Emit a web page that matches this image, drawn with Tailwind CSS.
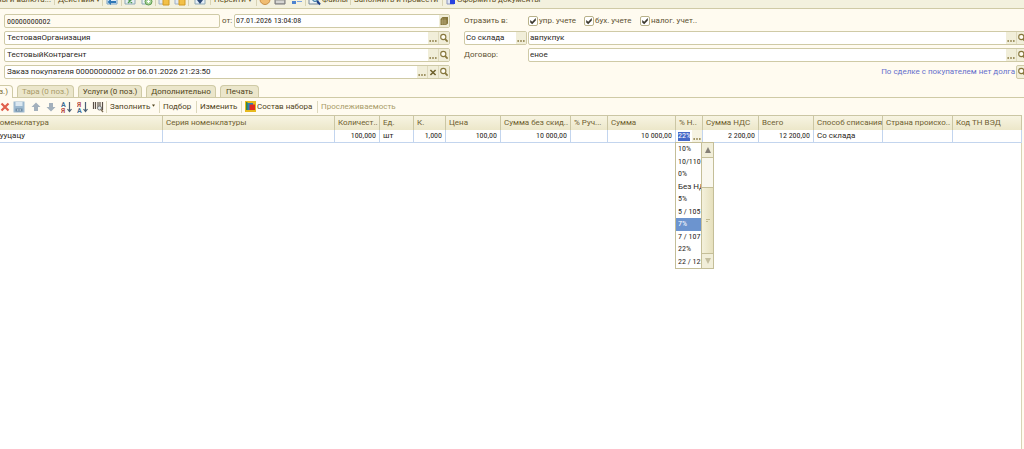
<!DOCTYPE html>
<html lang="ru">
<head>
    <meta charset="UTF-8">
    <meta name="viewport" content="width=device-width, initial-scale=1.0">
    <title>Реализация товаров и услуг</title>
    <script src="https://cdn.jsdelivr.net/npm/@tailwindcss/browser@4"></script>
</head>
<body class="min-h-screen bg-white overflow-hidden font-['Roboto',sans-serif] text-[8px] leading-[10px] text-[#2b2823]">

<!-- Значки, общие для полей -->
<svg class="hidden">
    <symbol id="lupa" viewBox="0 0 10 12"><circle cx="4.3" cy="5" r="2.6" fill="#fffdf2" stroke="#85763c" stroke-width="1.1"/><path d="M6.2 7.1 8.6 9.6" stroke="#85763c" stroke-width="1.7"/></symbol>
    <symbol id="dots" viewBox="0 0 10 12"><path d="M1.4 9h1.6M4.2 9h1.6M7 9h1.6" stroke="#85763c" stroke-width="1.4"/></symbol>
    <symbol id="clear" viewBox="0 0 10 12"><path d="M2.4 4 7.6 9M7.6 4 2.4 9" stroke="#6e602c" stroke-width="1.6"/></symbol>
    <symbol id="calendar" viewBox="0 0 10 12"><path d="M3.5 2H9v6.5L7 10H1.5V4z" fill="#85763c"/><path d="M1.8 6h6M1.8 8h6M3.8 3.4V10M6 3.4V10" stroke="#c9bf8c" stroke-width=".5"/></symbol>
    <symbol id="check" viewBox="0 0 10 10"><path d="M2.2 4v2.4l2 1.9 3.6-3.9V2L4.2 5.8z" fill="#3d3a30"/></symbol>
</svg>

<!-- Командная панель документа -->
<header class="h-[9px] overflow-hidden bg-[#f3f1de] border-b border-[#cfcaa6] text-[#5e4f1c]">
    <nav class="flex items-center -mt-[7px] h-[14px] whitespace-nowrap">
        <button class="w-[54px] shrink-0 flex justify-end pr-[3px]">Цены и валюта...</button>
        <button class="w-[48px] pl-[3px] text-left border-l border-[#d8d3b4]">Действия ▾</button>
        <button class="w-[19px] flex justify-center border-l border-[#d8d3b4]" aria-label="Перейти в список">
            <svg class="w-3 h-3" viewBox="0 0 12 12"><path d="M1 1h10v9H1z" fill="#dcebf7" stroke="#7ba3c4"/><path d="M10 7H5V4.5L1.5 8 5 11V9h5z" fill="#2f78b5"/></svg>
        </button>
        <button class="w-[17px] flex justify-center border-l border-[#d8d3b4]" aria-label="Обновить">
            <svg class="w-3 h-3" viewBox="0 0 12 12"><path d="M1 1h10v9H1z" fill="#e4eef2" stroke="#8fa9b5"/><path d="M4 5l4 4M8 5 4 9" stroke="#4f9a4f" stroke-width="1.4"/></svg>
        </button>
        <button class="w-[17px] flex justify-center" aria-label="Скопировать">
            <svg class="w-3 h-3" viewBox="0 0 12 12"><path d="M1 1h7v9H1z" fill="#eef3f5" stroke="#8fa9b5"/><circle cx="7.5" cy="7.5" r="3.5" fill="#a9d39b" stroke="#5d9a4e"/><path d="M6 7.5h3M7.5 6v3" stroke="#fff"/></svg>
        </button>
        <button class="w-[17px] flex justify-center border-l border-[#d8d3b4]" aria-label="Провести">
            <svg class="w-3 h-3" viewBox="0 0 12 12"><path d="M1 1h8v9H1z" fill="#e2e9f2" stroke="#9fb0c6"/><path d="M5 5h6v6H5z" fill="#f2c048" stroke="#d19a25"/></svg>
        </button>
        <button class="w-[16px] flex justify-center" aria-label="Отменить проведение">
            <svg class="w-3 h-3" viewBox="0 0 12 12"><path d="M1 1h8v9H1z" fill="#e2e9f2" stroke="#9fb0c6"/><path d="M5 5h6v6H5z" fill="#f2c048" stroke="#d19a25"/></svg>
        </button>
        <button class="w-[22px] flex justify-center border-l border-[#d8d3b4]" aria-label="Ввести на основании">
            <svg class="w-3 h-3" viewBox="0 0 12 12"><path d="M1 1h10v9H1z" fill="#e4eef7" stroke="#8fa9b5"/><path d="M3 6h6L6 10z" fill="#2c4a78"/></svg>
        </button>
        <button class="w-[46px] pl-[3px] text-left border-l border-[#d8d3b4]">Перейти ▾</button>
        <button class="w-[16px] flex justify-center border-l border-[#d8d3b4]" aria-label="Справка">
            <svg class="w-3 h-3" viewBox="0 0 12 12"><circle cx="6" cy="5.5" r="5" fill="#f0bd72" stroke="#c98f45"/></svg>
        </button>
        <button class="w-[16px] flex justify-center" aria-label="Печать документа">
            <svg class="w-3 h-3" viewBox="0 0 12 12"><path d="M1 4h10v6H1z" fill="#b5b5b0" stroke="#77777a"/><path d="M2 8h8" stroke="#f5f5f5"/></svg>
        </button>
        <button class="w-[17px] flex justify-center" aria-label="Структура">
            <svg class="w-3 h-3" viewBox="0 0 12 12"><path d="M1 2h4v4H1zM1 7h4v3H1z" fill="#4d83d0"/><path d="M6 5h5M6 7.5h5" stroke="#7ba3e0"/></svg>
        </button>
        <button class="w-[45px] flex items-center gap-px pl-[2px] border-l border-[#d8d3b4]">
            <svg class="w-[13px] h-3" viewBox="0 0 13 12"><path d="M1 1h9v9H1z" fill="#eef3f5" stroke="#77889a"/><circle cx="7" cy="5" r="2.5" fill="#bfe3ef" stroke="#33719c"/><path d="M9 7l3 3.5" stroke="#1d3f88" stroke-width="2"/></svg>
            Файлы
        </button>
        <button class="w-[92px] pl-[3px] text-left border-l border-[#d8d3b4]">Заполнить и провести</button>
        <button class="flex items-center pl-[3px] border-l border-[#d8d3b4]">
            <svg class="w-[11px] h-3" viewBox="0 0 11 12"><path d="M1 1h7v9H1z" fill="#dfe5f5" stroke="#8d97bd"/><path d="M4 6h5v4H4z" fill="#2742e0"/></svg>
            Оформить документы
        </button>
    </nav>
</header>

<main class="overflow-hidden bg-[#fffbf0]">
    <!-- Шапка документа -->
    <form class="flex gap-[14px] pl-1 pt-[5px] pb-[6px] -mr-1">
        <div class="w-[446px] shrink-0 flex flex-col gap-[3px]">
            <div class="flex items-center h-[14px]">
                <input aria-label="Номер" value="00000000002" class="w-[216px] h-full px-[2px] border border-[#cfcaa6] rounded-xs bg-[#fffbf0] font-['Roboto_Condensed','Roboto',sans-serif]">
                <label for="date" class="w-[14px] pl-[2px] text-[#5e5230]">от:</label>
                <div class="flex-1 flex h-full border border-[#cfcaa6] rounded-xs bg-white">
                    <input id="date" value="07.01.2026 13:04:08" class="flex-1 min-w-0 px-px font-['Roboto_Condensed','Roboto',sans-serif]">
                    <button type="button" aria-label="Календарь" class="w-[10px] bg-[#f1eed9]"><svg class="w-[10px] h-3"><use href="#calendar"/></svg></button>
                </div>
            </div>
            <div class="flex h-[14px] border border-[#cfcaa6] rounded-xs bg-white">
                <input aria-label="Организация" value="ТестоваяОрганизация" class="flex-1 min-w-0 px-[2px]">
                <button type="button" aria-label="Выбрать" class="w-[10px] bg-[#f1eed9]"><svg class="w-[10px] h-3"><use href="#dots"/></svg></button>
                <button type="button" aria-label="Открыть" class="w-[11px] bg-[#f1eed9] border-l border-[#dfdabd]"><svg class="w-[10px] h-3"><use href="#lupa"/></svg></button>
            </div>
            <div class="flex h-[14px] border border-[#cfcaa6] rounded-xs bg-white">
                <input aria-label="Контрагент" value="ТестовыйКонтрагент" class="flex-1 min-w-0 px-[2px]">
                <button type="button" aria-label="Выбрать" class="w-[10px] bg-[#f1eed9]"><svg class="w-[10px] h-3"><use href="#dots"/></svg></button>
                <button type="button" aria-label="Открыть" class="w-[11px] bg-[#f1eed9] border-l border-[#dfdabd]"><svg class="w-[10px] h-3"><use href="#lupa"/></svg></button>
            </div>
            <div class="flex h-[14px] border border-[#cfcaa6] rounded-xs bg-white">
                <input aria-label="Сделка" value="Заказ покупателя 00000000002 от 06.01.2026 21:23:50" class="flex-1 min-w-0 px-[2px]">
                <button type="button" aria-label="Выбрать" class="w-[10px] bg-[#f1eed9]"><svg class="w-[10px] h-3"><use href="#dots"/></svg></button>
                <button type="button" aria-label="Очистить" class="w-[11px] bg-[#f1eed9] border-l border-[#dfdabd]"><svg class="w-[10px] h-3"><use href="#clear"/></svg></button>
                <button type="button" aria-label="Открыть" class="w-[11px] bg-[#f1eed9] border-l border-[#dfdabd]"><svg class="w-[10px] h-3"><use href="#lupa"/></svg></button>
            </div>
        </div>

        <div class="flex-1 min-w-0 flex flex-col gap-[3px] text-[#5e5230]">
            <div class="flex items-center h-[14px]">
                <span class="w-16">Отразить в:</span>
                <label class="w-14 flex items-center gap-px whitespace-nowrap">
                    <span class="relative w-[10px] h-[10px]"><input type="checkbox" checked class="block appearance-none w-[10px] h-[10px] border border-[#b9b28a] rounded-xs bg-white"><svg class="absolute inset-0 w-[10px] h-[10px] pointer-events-none"><use href="#check"/></svg></span>
                    упр. учете
                </label>
                <label class="w-14 flex items-center gap-px whitespace-nowrap">
                    <span class="relative w-[10px] h-[10px]"><input type="checkbox" checked class="block appearance-none w-[10px] h-[10px] border border-[#b9b28a] rounded-xs bg-white"><svg class="absolute inset-0 w-[10px] h-[10px] pointer-events-none"><use href="#check"/></svg></span>
                    бух. учете
                </label>
                <label class="flex items-center gap-px whitespace-nowrap">
                    <span class="relative w-[10px] h-[10px]"><input type="checkbox" checked class="block appearance-none w-[10px] h-[10px] border border-[#b9b28a] rounded-xs bg-white"><svg class="absolute inset-0 w-[10px] h-[10px] pointer-events-none"><use href="#check"/></svg></span>
                    налог. учет..
                </label>
            </div>
            <div class="flex gap-px h-[14px] text-[#2b2823]">
                <div class="w-[63px] flex border border-[#cfcaa6] rounded-xs bg-white">
                    <input aria-label="Вид отгрузки" value="Со склада" class="flex-1 min-w-0 px-px">
                    <button type="button" aria-label="Выбрать" class="w-[10px] bg-[#f1eed9]"><svg class="w-[10px] h-3"><use href="#dots"/></svg></button>
                </div>
                <div class="flex-1 flex border border-[#cfcaa6] rounded-xs bg-white">
                    <input aria-label="Склад" value="авпукпук" class="flex-1 min-w-0 px-px">
                    <button type="button" aria-label="Выбрать" class="w-[10px] bg-[#f1eed9]"><svg class="w-[10px] h-3"><use href="#dots"/></svg></button>
                    <button type="button" aria-label="Открыть" class="w-[11px] bg-[#f1eed9] border-l border-[#dfdabd]"><svg class="w-[10px] h-3"><use href="#lupa"/></svg></button>
                </div>
            </div>
            <div class="flex items-center h-[14px]">
                <label for="contract" class="w-16">Договор:</label>
                <div class="flex-1 flex h-full border border-[#cfcaa6] rounded-xs bg-white text-[#2b2823]">
                    <input id="contract" value="еное" class="flex-1 min-w-0 px-px">
                    <button type="button" aria-label="Выбрать" class="w-[10px] bg-[#f1eed9]"><svg class="w-[10px] h-3"><use href="#dots"/></svg></button>
                    <button type="button" aria-label="Открыть" class="w-[11px] bg-[#f1eed9] border-l border-[#dfdabd]"><svg class="w-[10px] h-3"><use href="#lupa"/></svg></button>
                </div>
            </div>
            <div class="flex items-center justify-end gap-px h-[14px]">
                <a href="#" class="text-[#6670cc]">По сделке с покупателем нет долга</a>
                <button type="button" aria-label="Открыть" class="w-3 h-full border border-[#cfcaa6] rounded-xs bg-[#f1eed9]"><svg class="w-[10px] h-3"><use href="#lupa"/></svg></button>
            </div>
        </div>
    </form>

    <!-- Закладки -->
    <div role="tablist" class="flex gap-1 h-[13px] border-b border-[#cfcaa6] text-[#4f431a] whitespace-nowrap">
        <button role="tab" aria-selected="true" class="w-[13px] h-[13px] flex justify-end pr-1 items-center border-t border-r border-[#cfcaa6] rounded-tr-sm bg-[#fffbf0] text-[#7d6d35]">Товары (1 поз.)</button>
        <button role="tab" class="w-[57px] border border-b-0 border-[#cfcaa6] rounded-t-sm bg-[#ebe6cb] text-[#a99b68]">Тара (0 поз.)</button>
        <button role="tab" class="w-[64px] border border-b-0 border-[#cfcaa6] rounded-t-sm bg-[#ebe6cb]">Услуги (0 поз.)</button>
        <button role="tab" class="w-[70px] border border-b-0 border-[#cfcaa6] rounded-t-sm bg-[#ebe6cb]">Дополнительно</button>
        <button role="tab" class="w-[39px] border border-b-0 border-[#cfcaa6] rounded-t-sm bg-[#ebe6cb]">Печать</button>
    </div>

    <!-- Панель табличной части -->
    <div class="flex items-center h-[17px] text-[#4f431a]">
        <button aria-label="Удалить" class="w-[10px] flex justify-center"><svg class="w-[10px] h-[10px]" viewBox="0 0 10 10"><path d="M1.5 1.5 8.5 8.5M8.5 1.5 1.5 8.5" stroke="#e0604c" stroke-width="2.2"/></svg></button>
        <button aria-label="Закончить редактирование" class="w-[18px] flex justify-center"><svg class="w-3 h-3" viewBox="0 0 12 12"><path d="M.5.5h11v11H.5z" fill="#9db9cf"/><path d="M2.5 1h7v4h-7z" fill="#dce8f0"/><path d="M2.5 7.5h7v3h-7z" fill="#6e8ca5"/><path d="M4 9h1.5M6.5 9H8" stroke="#e8f0f5"/></svg></button>
        <button aria-label="Вверх" class="w-[15px] flex justify-center"><svg class="w-[10px] h-[10px]" viewBox="0 0 10 10"><path d="M5 .5 9.5 5H7v4H3V5H.5z" fill="#a3b0bc"/></svg></button>
        <button aria-label="Вниз" class="w-4 flex justify-center"><svg class="w-[10px] h-[10px]" viewBox="0 0 10 10"><path d="M5 9.5.5 5H3V1h4v4h2.5z" fill="#a3b0bc"/></svg></button>
        <button aria-label="Сортировать по возрастанию" class="w-[15px] flex justify-center"><svg class="w-[11px] h-3" viewBox="0 0 11 12"><text x="0" y="6" font-size="7" font-weight="700" fill="#3f6f96">А</text><text x="0" y="12" font-size="7" font-weight="700" fill="#b8504a">Я</text><path d="M8.5 1v9M6.5 8l2 2.5 2-2.5" fill="none" stroke="#4a5f75" stroke-width="1.2"/></svg></button>
        <button aria-label="Сортировать по убыванию" class="w-4 flex justify-center"><svg class="w-[11px] h-3" viewBox="0 0 11 12"><text x="0" y="6" font-size="7" font-weight="700" fill="#b8504a">Я</text><text x="0" y="12" font-size="7" font-weight="700" fill="#3f6f96">А</text><path d="M8.5 1v9M6.5 8l2 2.5 2-2.5" fill="none" stroke="#4a5f75" stroke-width="1.2"/></svg></button>
        <button aria-label="Штрихкод" class="w-4 flex justify-center"><svg class="w-3 h-3" viewBox="0 0 12 12"><path d="M1.5 1v7M3.5 1v7M6 1v6M8 1v5M10.5 1v8" stroke="#5a5048" stroke-width="1.2"/><circle cx="7.5" cy="7" r="2" fill="#dfe8ee" stroke="#7a7a78"/><path d="M9 8.5l2 2.5" stroke="#7a6a50" stroke-width="1.3"/></svg></button>
        <button class="h-3 w-[53px] pl-[3px] text-left border-l border-[#ddd8bc]">Заполнить <svg class="inline w-[3px] h-[3px] mb-px" viewBox="0 0 4 3"><path d="M0 0h4L2 3z" fill="#4f431a"/></svg></button>
        <button class="h-3 w-[37px] pl-[3px] text-left border-l border-[#ddd8bc]">Подбор</button>
        <button class="h-3 w-[45px] pl-[3px] text-left border-l border-[#ddd8bc]">Изменить</button>
        <button class="h-3 w-[76px] pl-[3px] flex items-center gap-px border-l border-[#ddd8bc] whitespace-nowrap">
            <svg class="w-[11px] h-[11px] shrink-0" viewBox="0 0 11 11"><path d="M0 0h11v11H0z" fill="#e6b91e"/><path d="M2 2h6v7H2z" fill="#2d7fb8"/><path d="M1 1h1.5v8H1z" fill="#3a8a3a"/><path d="M4.5 3.5H10V9H4.5z" fill="#e02a20"/></svg>
            Состав набора
        </button>
        <button disabled class="h-3 pl-[3px] border-l border-[#ddd8bc] text-[#a99b68]">Прослеживаемость</button>
    </div>

    <!-- Табличная часть: товары -->
    <div class="pr-[2px]">
        <table class="w-full table-fixed border-separate border-spacing-0 bg-white whitespace-nowrap">
            <colgroup>
                <col><col class="w-[172px]"><col class="w-[45px]"><col class="w-[34px]"><col class="w-[32px]">
                <col class="w-[55px]"><col class="w-[70px]"><col class="w-[37px]"><col class="w-[68px]"><col class="w-[27px]">
                <col class="w-[56px]"><col class="w-[55px]"><col class="w-[69px]"><col class="w-[70px]"><col class="w-[69px]">
            </colgroup>
            <thead>
                <tr class="h-[15px] text-left text-[#6f6030] bg-linear-to-b from-[#f8f5e4] to-[#ece7c9] *:font-normal *:p-0 *:pl-[3px] *:border-t *:border-r *:border-[#cbc6a4]">
                    <th class="overflow-hidden"><span class="block -ml-[9px]">Номенклатура</span></th>
                    <th>Серия номенклатуры</th>
                    <th>Количест..</th>
                    <th>Ед.</th>
                    <th>К.</th>
                    <th>Цена</th>
                    <th>Сумма без скид..</th>
                    <th>% Руч...</th>
                    <th>Сумма</th>
                    <th>% Н..</th>
                    <th>Сумма НДС</th>
                    <th>Всего</th>
                    <th>Способ списания</th>
                    <th>Страна происхо..</th>
                    <th>Код ТН ВЭД</th>
                </tr>
            </thead>
            <tbody>
                <tr class="h-[13px] *:p-0 *:px-[3px] *:border-r *:border-b *:border-[#c3d5ee]">
                    <td class="overflow-hidden"><span class="block -ml-[7px]">уууцацу</span></td>
                    <td></td>
                    <td class="text-right font-['Roboto_Condensed','Roboto',sans-serif]">100,000</td>
                    <td>шт</td>
                    <td class="text-right font-['Roboto_Condensed','Roboto',sans-serif]">1,000</td>
                    <td class="text-right font-['Roboto_Condensed','Roboto',sans-serif]">100,00</td>
                    <td class="text-right font-['Roboto_Condensed','Roboto',sans-serif]">10 000,00</td>
                    <td></td>
                    <td class="text-right font-['Roboto_Condensed','Roboto',sans-serif]">10 000,00</td>
                    <td>
                        <div class="relative -mx-[3px] h-3 flex items-center pl-[2px]">
                            <input aria-label="Ставка НДС" value="22%" class="w-3 h-[9px] bg-[#4668c8] text-white font-['Roboto_Condensed','Roboto',sans-serif]">
                            <button aria-label="Выбрать" class="ml-[2px] w-[10px] h-3 bg-[#f6f3e2]"><svg class="w-[10px] h-3"><use href="#dots"/></svg></button>
                            <!-- Список ставок НДС -->
                            <div class="absolute top-full -left-px z-10 w-[39px] h-[127px] flex border border-[#c4be98] bg-white">
                                <ul role="listbox" class="flex-1 min-w-0 flex flex-col overflow-hidden whitespace-nowrap *:flex-1 *:flex *:items-center *:pl-[2px] font-['Roboto_Condensed','Roboto',sans-serif]">
                                    <li role="option">10%</li>
                                    <li role="option">10/110</li>
                                    <li role="option">0%</li>
                                    <li role="option" class="font-['Roboto',sans-serif]">Без НДС</li>
                                    <li role="option">5%</li>
                                    <li role="option">5 / 105</li>
                                    <li role="option" aria-selected="true" class="bg-[#6c94cf] text-white">7%</li>
                                    <li role="option">7 / 107</li>
                                    <li role="option">22%</li>
                                    <li role="option">22 / 122</li>
                                </ul>
                                <div class="w-3 flex flex-col border-l border-[#c4be98] bg-[#f9f7ee]">
                                    <button aria-label="Прокрутить вверх" class="h-[15px] flex items-center justify-center border-b border-[#c4be98] bg-[#f1eed9]"><svg class="w-[6px] h-[6px]" viewBox="0 0 6 6"><path d="M3 0 6 6H0z" fill="#858076"/></svg></button>
                                    <div class="h-[29px]"></div>
                                    <div class="flex-1 flex items-center justify-center border-y border-[#c4be98] bg-linear-to-r from-[#f4f1dc] to-[#e6e0bd]"><svg class="w-1 h-[3px]" viewBox="0 0 4 3"><path d="M0 .5h4M0 2.5h2" stroke="#c0b98f"/></svg></div>
                                    <button aria-label="Прокрутить вниз" class="h-[14px] flex items-center justify-center bg-[#f1eed9]"><svg class="w-[6px] h-[6px]" viewBox="0 0 6 6"><path d="M0 0h6L3 6z" fill="#c5bf9f"/></svg></button>
                                </div>
                            </div>
                        </div>
                    </td>
                    <td class="text-right font-['Roboto_Condensed','Roboto',sans-serif]">2 200,00</td>
                    <td class="text-right font-['Roboto_Condensed','Roboto',sans-serif]">12 200,00</td>
                    <td>Со склада</td>
                    <td></td>
                    <td></td>
                </tr>
            </tbody>
        </table>
        <div class="h-[calc(100vh-143px)] min-h-[130px] bg-white border-r border-[#d8d3b4]"></div>
    </div>
</main>
</body>
</html>
